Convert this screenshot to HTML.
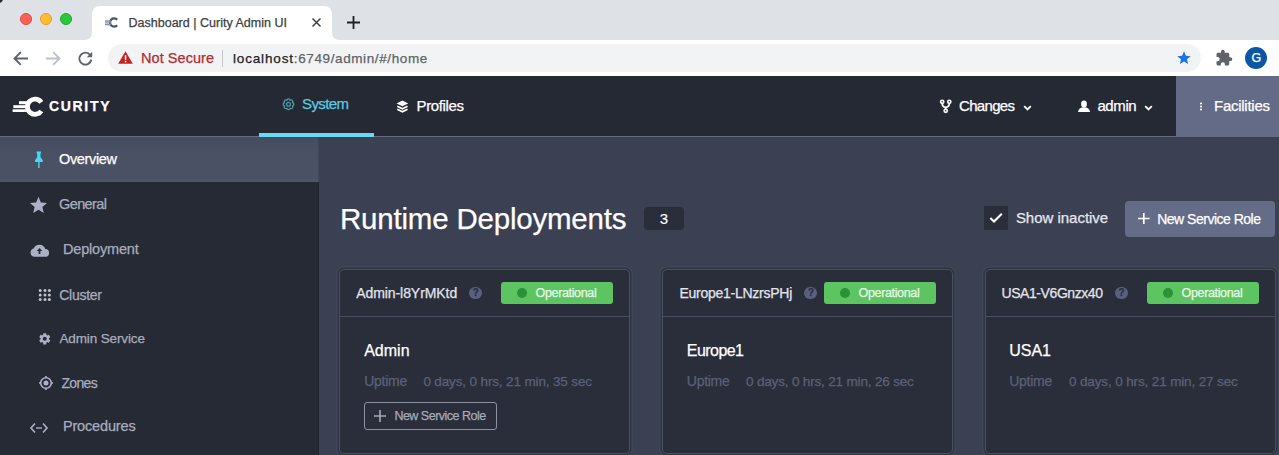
<!DOCTYPE html><html><head><meta charset="utf-8"><style>
*{margin:0;padding:0;box-sizing:border-box}
html,body{width:1279px;height:455px;overflow:hidden;background:#3b4052;font-family:"Liberation Sans",sans-serif;position:relative}
.a{position:absolute}
.t{position:absolute;white-space:nowrap;-webkit-text-stroke:0.25px currentColor}
svg{position:absolute;overflow:visible}
</style></head><body><div class="a" style="left:0px;top:0px;width:1279px;height:40px;background:#dee1e6;"></div>
<div class="a" style="left:-6px;top:-6px;width:8.5px;height:8.5px;border-radius:50%;background:#2a2a2c"></div>
<div class="a" style="left:20px;top:12.8px;width:12px;height:12px;border-radius:50%;background:#fe5f57;border:0.5px solid #e14640"></div>
<div class="a" style="left:40px;top:12.8px;width:12px;height:12px;border-radius:50%;background:#febc2e;border:0.5px solid #dfa023"></div>
<div class="a" style="left:60px;top:12.8px;width:12px;height:12px;border-radius:50%;background:#28c840;border:0.5px solid #1aab29"></div>
<div class="a" style="left:92px;top:6px;width:240px;height:40px;background:#fff;border-radius:8px 8px 0 0"></div>
<svg style="left:84px;top:32px" width="8" height="8"><path d="M0 8 Q8 8 8 0 L8 8 Z" fill="#fff"/></svg>
<svg style="left:332px;top:32px" width="8" height="8"><path d="M8 8 Q0 8 0 0 L0 8 Z" fill="#fff"/></svg>
<div class="a" style="left:0px;top:40px;width:1279px;height:36px;background:#fff;"></div>
<svg style="left:0;top:0" width="130" height="40"><path d="M117.2 19.8 A4.1 4.1 0 1 0 117.2 25.2" fill="none" stroke="#4c5068" stroke-width="2.3"/><rect x="105" y="20.3" width="6" height="1.5" fill="#8a8fa3"/><rect x="105" y="22.3" width="6" height="1.2" fill="#8a8fa3"/><rect x="105" y="24" width="6" height="1.3" fill="#8a8fa3"/></svg>
<div class="t" style="left:128.50px;top:17.21px;font-size:12.5px;line-height:12.5px;color:#3c4043;letter-spacing:0.012px;">Dashboard | Curity Admin UI</div>
<svg style="left:311.5px;top:18px" width="9" height="9"><path d="M0.5 0.5 L8.5 8.5 M8.5 0.5 L0.5 8.5" stroke="#3c4043" stroke-width="1.5"/></svg>
<svg style="left:347px;top:16px" width="13" height="13"><path d="M6.5 0 V13 M0 6.5 H13" stroke="#202124" stroke-width="1.8"/></svg>
<svg style="left:13px;top:51px" width="16" height="15" viewBox="0 0 16 15"><path d="M15 7.5 H2 M7.8 1.2 L1.5 7.5 L7.8 13.8" fill="none" stroke="#5f6368" stroke-width="1.9"/></svg>
<svg style="left:45px;top:51px" width="16" height="15" viewBox="0 0 16 15"><path d="M1 7.5 H14 M8.2 1.2 L14.5 7.5 L8.2 13.8" fill="none" stroke="#bdc1c6" stroke-width="1.9"/></svg>
<svg style="left:78px;top:51px" width="15" height="15" viewBox="0 0 15 15"><path d="M12.3 4.2 A6 6 0 1 0 13.3 8.5" fill="none" stroke="#5f6368" stroke-width="1.9"/><path d="M14.2 0.8 V6.3 H8.7 Z" fill="#5f6368"/></svg>
<div class="a" style="left:108px;top:44px;width:1093px;height:28px;background:#f1f3f4;border-radius:14px"></div>
<svg style="left:118px;top:51px" width="15" height="13" viewBox="0 0 15 13"><path d="M7.5 0.3 L14.8 12.8 H0.2 Z" fill="#c5221f"/><rect x="6.8" y="4.2" width="1.5" height="4.6" fill="#fff"/><rect x="6.8" y="9.8" width="1.5" height="1.5" fill="#fff"/></svg>
<div class="t" style="left:141.00px;top:51.22px;font-size:14.5px;line-height:14.5px;color:#b42a2c;letter-spacing:0.052px;">Not Secure</div>
<div class="a" style="left:222px;top:50px;width:1px;height:17px;background:#c4c7cc;"></div>
<div class="t" style="left:232.90px;top:51.57px;font-size:13.5px;line-height:13.5px;color:#202124;letter-spacing:0.864px;">localhost</div>
<div class="t" style="left:293.80px;top:51.57px;font-size:13.5px;line-height:13.5px;color:#5f6368;letter-spacing:0.613px;">:6749/admin/#/home</div>
<svg style="left:1176px;top:50px" width="16" height="16" viewBox="0 0 24 24"><path d="M12 17.27L18.18 21l-1.64-7.03L22 9.24l-7.19-.61L12 2 9.19 8.63 2 9.24l5.46 4.73L5.82 21z" fill="#1a73e8"/></svg>
<svg style="left:1215px;top:49px" width="18" height="18" viewBox="0 0 24 24"><path d="M20.5 11H19V7c0-1.1-.9-2-2-2h-4V3.5C13 2.12 11.88 1 10.5 1S8 2.12 8 3.5V5H4c-1.1 0-1.99.9-1.99 2v3.8H3.5c1.49 0 2.7 1.21 2.7 2.7s-1.21 2.7-2.7 2.7H2V20c0 1.1.9 2 2 2h3.8v-1.5c0-1.49 1.21-2.7 2.7-2.7 1.49 0 2.7 1.21 2.7 2.7V22H17c1.1 0 2-.9 2-2v-4h1.5c1.38 0 2.5-1.12 2.5-2.5S21.88 11 20.5 11z" fill="#5f6368"/></svg>
<div class="a" style="left:1245px;top:47px;width:22px;height:22px;border-radius:50%;background:#0b57a4"></div>
<div class="t" style="left:1251.50px;top:51.91px;font-size:12.5px;line-height:12.5px;color:#fff;letter-spacing:0.000px;">G</div>
<div class="a" style="left:0px;top:76px;width:1279px;height:60px;background:#252933;"></div>
<div class="a" style="left:1176px;top:76px;width:103px;height:60px;background:#636b86;"></div>
<svg style="left:0;top:0" width="60" height="130"><path d="M41.3 102.4 A7.6 7.6 0 1 0 41.3 111.0" fill="none" stroke="#fff" stroke-width="4.8"/><rect x="19" y="101.2" width="11" height="3" fill="#fff"/><rect x="13.3" y="105.2" width="15" height="2.9" fill="#fff"/><rect x="12.6" y="109.3" width="15" height="2.7" fill="#fff"/></svg>
<div class="t" style="left:49.00px;top:98.84px;font-size:14px;line-height:14px;color:#fff;letter-spacing:1.678px;font-weight:700;">CURITY</div>
<div class="a" style="left:0px;top:136px;width:1279px;height:1px;background:#666b82;"></div>
<div class="a" style="left:259px;top:133px;width:115px;height:4px;background:#66dbf3;"></div>
<svg style="left:0;top:0" width="300" height="120"><path d="M292.57 105.98 A1.75 1.75 0 0 1 290.18 108.37 A1.75 1.75 0 0 1 286.82 108.37 A1.75 1.75 0 0 1 284.43 105.98 A1.75 1.75 0 0 1 284.43 102.62 A1.75 1.75 0 0 1 286.82 100.23 A1.75 1.75 0 0 1 290.18 100.23 A1.75 1.75 0 0 1 292.57 102.62 A1.75 1.75 0 0 1 292.57 105.98 Z" fill="none" stroke="#4f9aa4" stroke-width="1.3"/><circle cx="288.5" cy="104.3" r="1.9" fill="none" stroke="#4f9aa4" stroke-width="1.3"/></svg>
<div class="t" style="left:302.00px;top:96.30px;font-size:15px;line-height:15px;color:#5ccbe0;letter-spacing:-0.602px;">System</div>
<svg style="left:0;top:0" width="420" height="120"><path d="M402.4 100.6 L408.2 103.4 L402.4 106.2 L396.6 103.4 Z" fill="#fff"/><path d="M397.3 106.2 L402.4 108.7 L407.5 106.2 M397.3 109.3 L402.4 111.8 L407.5 109.3" fill="none" stroke="#fff" stroke-width="1.8"/></svg>
<div class="t" style="left:416.60px;top:98.30px;font-size:15px;line-height:15px;color:#fff;letter-spacing:-0.389px;">Profiles</div>
<svg style="left:0;top:0" width="960" height="120"><circle cx="942.2" cy="101.8" r="1.6" fill="none" stroke="#fff" stroke-width="1.6"/><circle cx="949.3" cy="101.8" r="1.6" fill="none" stroke="#fff" stroke-width="1.6"/><circle cx="945.7" cy="110.8" r="1.6" fill="none" stroke="#fff" stroke-width="1.6"/><path d="M942.2 103.4 Q942.2 106.8 945.7 107.3 Q949.3 106.8 949.3 103.4 M945.7 107.3 V109.2" fill="none" stroke="#fff" stroke-width="1.8"/></svg>
<div class="t" style="left:959.00px;top:98.20px;font-size:15px;line-height:15px;color:#fff;letter-spacing:-0.674px;">Changes</div>
<svg style="left:1023px;top:105px" width="9" height="6"><path d="M1.2 1.2 L4.5 4.5 L7.8 1.2" fill="none" stroke="#fff" stroke-width="1.9"/></svg>
<svg style="left:1078px;top:99px" width="12" height="13" viewBox="0 0 12 13"><ellipse cx="6" cy="5" rx="2.9" ry="3.6" fill="#fff"/><path d="M0 13 Q0.5 8.5 6 8.3 Q11.5 8.5 12 13 Z" fill="#fff"/></svg>
<div class="t" style="left:1097.40px;top:98.20px;font-size:15px;line-height:15px;color:#fff;letter-spacing:-0.390px;">admin</div>
<svg style="left:1144px;top:105px" width="9" height="6"><path d="M1.2 1.2 L4.5 4.5 L7.8 1.2" fill="none" stroke="#fff" stroke-width="1.9"/></svg>
<svg style="left:1199px;top:101px" width="4" height="12"><circle cx="2" cy="2.5" r="1.1" fill="#fff"/><circle cx="2" cy="5.5" r="1.1" fill="#fff"/><circle cx="2" cy="8.5" r="1.1" fill="#fff"/></svg>
<div class="t" style="left:1214.00px;top:98.09px;font-size:15px;line-height:15px;color:#fff;letter-spacing:-0.261px;">Facilities</div>
<div class="a" style="left:0px;top:137px;width:319px;height:318px;background:#262a34;"></div>
<div class="a" style="left:0px;top:137px;width:319px;height:45px;background:linear-gradient(#464c5f,#4b5165 40%,#4b5165 90%,#50566a);"></div>
<div class="a" style="left:318px;top:137px;width:1px;height:318px;background:rgba(0,0,0,0.12);"></div>
<svg style="left:0;top:0" width="60" height="180"><path d="M36.6 151.6 H41 V153.2 H40.5 V157.2 L42.8 160.3 V162 H39.6 V168 H38.2 V162 H35 V160.3 L37.2 157.2 V153.2 H36.6 Z" fill="#47d9ee"/></svg>
<div class="t" style="left:59.00px;top:152.02px;font-size:14.5px;line-height:14.5px;color:#ffffff;letter-spacing:-0.352px;">Overview</div>
<svg style="left:30px;top:196px" width="17" height="18" viewBox="2 2 20 19.3"><path d="M12 17.27L18.18 21l-1.64-7.03L22 9.24l-7.19-.61L12 2 9.19 8.63 2 9.24l5.46 4.73L5.82 21z" fill="#adb1c6"/></svg>
<div class="t" style="left:59.00px;top:196.72px;font-size:14.5px;line-height:14.5px;color:#a9adbf;letter-spacing:-0.599px;">General</div>
<svg style="left:30px;top:244px" width="19" height="13" viewBox="0 0 19 13"><path d="M15.3 5 A6.2 6.2 0 0 0 3.6 4.6 A4.2 4.2 0 0 0 4.2 12.8 H15 A3.9 3.9 0 0 0 15.3 5 Z" fill="#adb1c6"/><path d="M9.5 4 L12.3 7 H10.4 V10 H8.6 V7 H6.7 Z" fill="#272b36"/></svg>
<div class="t" style="left:63.00px;top:241.82px;font-size:14.5px;line-height:14.5px;color:#a9adbf;letter-spacing:-0.186px;">Deployment</div>
<svg style="left:39px;top:289px" width="12" height="12" viewBox="0 0 12 12"><circle cx="1.2" cy="1.5" r="1.5" fill="#bcbfcd"/><circle cx="1.2" cy="5.9" r="1.5" fill="#bcbfcd"/><circle cx="1.2" cy="10.4" r="1.5" fill="#bcbfcd"/><circle cx="6" cy="1.5" r="1.5" fill="#bcbfcd"/><circle cx="6" cy="5.9" r="1.5" fill="#bcbfcd"/><circle cx="6" cy="10.4" r="1.5" fill="#bcbfcd"/><circle cx="10.4" cy="1.5" r="1.5" fill="#bcbfcd"/><circle cx="10.4" cy="5.9" r="1.5" fill="#bcbfcd"/><circle cx="10.4" cy="10.4" r="1.5" fill="#bcbfcd"/></svg>
<div class="t" style="left:59.20px;top:287.74px;font-size:14px;line-height:14px;color:#a9adbf;letter-spacing:-0.259px;">Cluster</div>
<svg style="left:38px;top:332px" width="13.5" height="13.5" viewBox="0 0 24 24"><path d="M19.43 12.98c.04-.32.07-.64.07-.98s-.03-.66-.07-.98l2.11-1.65c.19-.15.24-.42.12-.64l-2-3.46c-.12-.22-.39-.3-.61-.22l-2.49 1c-.52-.4-1.08-.73-1.69-.98l-.38-2.65C14.46 2.18 14.25 2 14 2h-4c-.25 0-.46.18-.49.42l-.38 2.65c-.61.25-1.170.59-1.69.98l-2.49-1c-.23-.09-.49 0-.61.22l-2 3.46c-.13.22-.07.49.12.64l2.11 1.65c-.04.32-.07.65-.07.98s.03.66.07.98l-2.11 1.65c-.19.15-.24.42-.12.64l2 3.46c.12.22.39.3.61.22l2.49-1c.52.4 1.08.73 1.69.98l.38 2.65c.03.24.24.42.49.42h4c.25 0 .46-.18.49-.42l.38-2.65c.61-.25 1.17-.59 1.69-.98l2.49 1c.23.09.49 0 .61-.22l2-3.46c.12-.22.07-.49-.12-.64l-2.11-1.65zM12 15.5c-1.93 0-3.5-1.57-3.5-3.5s1.57-3.5 3.5-3.5 3.5 1.57 3.5 3.5-1.57 3.5-3.5 3.5z" fill="#adb1c6"/></svg>
<div class="t" style="left:59.40px;top:331.67px;font-size:13.5px;line-height:13.5px;color:#a9adbf;letter-spacing:-0.120px;">Admin Service</div>
<svg style="left:39px;top:376px" width="14" height="14" viewBox="0 0 14 14"><circle cx="7" cy="7" r="5.3" fill="none" stroke="#adb1c6" stroke-width="1.6"/><circle cx="7" cy="7" r="2.5" fill="#adb1c6"/><path d="M7 0 V1.8 M7 12.2 V14 M0 7 H1.8 M12.2 7 H14" stroke="#adb1c6" stroke-width="1.6"/></svg>
<div class="t" style="left:61.40px;top:375.54px;font-size:14px;line-height:14px;color:#a9adbf;letter-spacing:-0.651px;">Zones</div>
<svg style="left:30px;top:421.5px" width="18" height="12" viewBox="0 0 18 12"><path d="M5 1.5 L1 6 L5 10.5 M13 1.5 L17 6 L13 10.5" fill="none" stroke="#adb1c6" stroke-width="1.6"/><circle cx="7" cy="6" r="0.9" fill="#adb1c6"/><circle cx="9" cy="6" r="0.9" fill="#adb1c6"/><circle cx="11" cy="6" r="0.9" fill="#adb1c6"/></svg>
<div class="t" style="left:62.90px;top:419.12px;font-size:14.5px;line-height:14.5px;color:#a9adbf;letter-spacing:-0.150px;">Procedures</div>
<div class="t" style="left:340.00px;top:204.01px;font-size:29.5px;line-height:29.5px;color:#ffffff;letter-spacing:-0.205px;">Runtime Deployments</div>
<div class="a" style="left:644px;top:207px;width:40px;height:23px;background:#2a2e3a;border-radius:4px"></div>
<div class="t" style="left:659.80px;top:211.29px;font-size:15px;line-height:15px;color:#ffffff;letter-spacing:0.000px;-webkit-text-stroke:0.1px #fff;">3</div>
<div class="a" style="left:984px;top:206px;width:24px;height:23.5px;background:#2a2e3a;border-radius:1px"></div>
<svg style="left:989px;top:211.8px" width="14" height="12" viewBox="0 0 14 12"><path d="M1.3 6 L5 9.6 L12.8 1.8" fill="none" stroke="#fff" stroke-width="2.1"/></svg>
<div class="t" style="left:1015.90px;top:210.39px;font-size:15px;line-height:15px;color:#e6e8ef;letter-spacing:-0.021px;">Show inactive</div>
<div class="a" style="left:1125px;top:201px;width:150px;height:36px;background:#646c88;border-radius:4px"></div>
<svg style="left:1137.7px;top:213.2px" width="12" height="12"><path d="M5.8 0 V11 M0 5.5 H11.6" stroke="#fff" stroke-width="1.7"/></svg>
<div class="t" style="left:1157.20px;top:212.44px;font-size:14px;line-height:14px;color:#ffffff;letter-spacing:-0.497px;">New Service Role</div>
<div class="a" style="left:339px;top:269px;width:291px;height:185px;background:#2a2e3b;border:1px solid #4a4f62;border-radius:5px;box-shadow:0 0 0 1.5px rgba(20,22,30,0.35),0 0 0 3px rgba(80,86,104,0.25)"></div>
<div class="a" style="left:340px;top:316px;width:289px;height:1px;background:#4a4f62;"></div>
<div class="t" style="left:356.20px;top:286.44px;font-size:14px;line-height:14px;color:#e3e5eb;letter-spacing:-0.071px;">Admin-l8YrMKtd</div>
<div class="a" style="left:469.2px;top:286.5px;width:12.5px;height:12.5px;border-radius:50%;background:#5a6180"></div>
<div class="t" style="left:472.80px;top:288.33px;font-size:10px;line-height:10px;color:#2a2e3b;letter-spacing:0.000px;font-weight:700;">?</div>
<div class="a" style="left:501px;top:282px;width:112px;height:22px;background:#5cc562;border-radius:3px"></div>
<div class="a" style="left:517px;top:288px;width:10px;height:10px;border-radius:50%;background:#2c9137"></div>
<div class="t" style="left:535.60px;top:287.01px;font-size:12.5px;line-height:12.5px;color:#eaf7ea;letter-spacing:-0.352px;">Operational</div>
<div class="t" style="left:364.20px;top:343.35px;font-size:16px;line-height:16px;color:#ffffff;letter-spacing:0.010px;">Admin</div>
<div class="t" style="left:364.20px;top:374.14px;font-size:14px;line-height:14px;color:#5b6175;letter-spacing:-0.270px;">Uptime</div>
<div class="t" style="left:423.40px;top:374.57px;font-size:13.5px;line-height:13.5px;color:#5b6175;letter-spacing:-0.139px;">0 days, 0 hrs, 21 min, 35 sec</div>
<div class="a" style="left:364px;top:402px;width:133px;height:28px;background:transparent;border:1px solid #8d92a3;border-radius:3px"></div>
<svg style="left:374px;top:410px" width="12" height="12"><path d="M6 0 V12 M0 6 H12" stroke="#a3a8b7" stroke-width="1.6"/></svg>
<div class="t" style="left:394.40px;top:409.61px;font-size:12.5px;line-height:12.5px;color:#a6abba;letter-spacing:-0.502px;">New Service Role</div>
<div class="a" style="left:662px;top:269px;width:291px;height:185px;background:#2a2e3b;border:1px solid #4a4f62;border-radius:5px;box-shadow:0 0 0 1.5px rgba(20,22,30,0.35),0 0 0 3px rgba(80,86,104,0.25)"></div>
<div class="a" style="left:663px;top:316px;width:289px;height:1px;background:#4a4f62;"></div>
<div class="t" style="left:679.40px;top:286.44px;font-size:14px;line-height:14px;color:#e3e5eb;letter-spacing:-0.255px;">Europe1-LNzrsPHj</div>
<div class="a" style="left:804.3px;top:286.5px;width:12.5px;height:12.5px;border-radius:50%;background:#5a6180"></div>
<div class="t" style="left:807.90px;top:288.33px;font-size:10px;line-height:10px;color:#2a2e3b;letter-spacing:0.000px;font-weight:700;">?</div>
<div class="a" style="left:824px;top:282px;width:112px;height:22px;background:#5cc562;border-radius:3px"></div>
<div class="a" style="left:840px;top:288px;width:10px;height:10px;border-radius:50%;background:#2c9137"></div>
<div class="t" style="left:858.60px;top:287.01px;font-size:12.5px;line-height:12.5px;color:#eaf7ea;letter-spacing:-0.352px;">Operational</div>
<div class="t" style="left:686.80px;top:343.35px;font-size:16px;line-height:16px;color:#ffffff;letter-spacing:-0.549px;">Europe1</div>
<div class="t" style="left:686.80px;top:374.14px;font-size:14px;line-height:14px;color:#5b6175;letter-spacing:-0.270px;">Uptime</div>
<div class="t" style="left:746.00px;top:374.57px;font-size:13.5px;line-height:13.5px;color:#5b6175;letter-spacing:-0.171px;">0 days, 0 hrs, 21 min, 26 sec</div>
<div class="a" style="left:985px;top:269px;width:291px;height:185px;background:#2a2e3b;border:1px solid #4a4f62;border-radius:5px;box-shadow:0 0 0 1.5px rgba(20,22,30,0.35),0 0 0 3px rgba(80,86,104,0.25)"></div>
<div class="a" style="left:986px;top:316px;width:289px;height:1px;background:#4a4f62;"></div>
<div class="t" style="left:1001.50px;top:286.44px;font-size:14px;line-height:14px;color:#e3e5eb;letter-spacing:-0.426px;">USA1-V6Gnzx40</div>
<div class="a" style="left:1115px;top:286.5px;width:12.5px;height:12.5px;border-radius:50%;background:#5a6180"></div>
<div class="t" style="left:1118.60px;top:288.33px;font-size:10px;line-height:10px;color:#2a2e3b;letter-spacing:0.000px;font-weight:700;">?</div>
<div class="a" style="left:1147px;top:282px;width:112px;height:22px;background:#5cc562;border-radius:3px"></div>
<div class="a" style="left:1163px;top:288px;width:10px;height:10px;border-radius:50%;background:#2c9137"></div>
<div class="t" style="left:1181.60px;top:287.01px;font-size:12.5px;line-height:12.5px;color:#eaf7ea;letter-spacing:-0.352px;">Operational</div>
<div class="t" style="left:1009.20px;top:343.35px;font-size:16px;line-height:16px;color:#ffffff;letter-spacing:0.000px;">USA1</div>
<div class="t" style="left:1009.20px;top:374.14px;font-size:14px;line-height:14px;color:#5b6175;letter-spacing:-0.270px;">Uptime</div>
<div class="t" style="left:1069.00px;top:374.57px;font-size:13.5px;line-height:13.5px;color:#5b6175;letter-spacing:-0.135px;">0 days, 0 hrs, 21 min, 27 sec</div></body></html>
